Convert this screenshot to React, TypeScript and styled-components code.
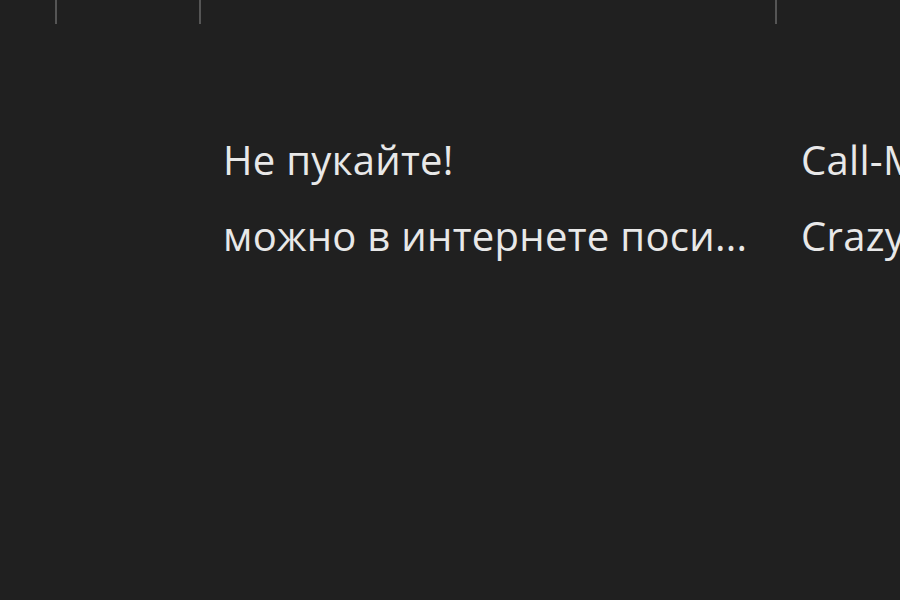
import React from 'react';
import styled, { createGlobalStyle } from 'styled-components';

interface Row {
  name: string;
  author: string;
}

const rows: Row[] = [
  { name: 'Не пукайте!', author: 'Call-Me Beep' },
  { name: 'можно в интернете поси...', author: 'Crazy Frog' },
];

const GlobalStyle = createGlobalStyle`
  html, body {
    margin: 0;
    padding: 0;
    background: #202020;
    overflow: hidden;
  }
`;

const Page = styled.div`
  width: 900px;
  height: 600px;
  background: #202020;
  color: #e8e8e8;
  font-family: 'Open Sans', 'Noto Sans', sans-serif;
  overflow: hidden;
`;

const Grid = styled.div`
  display: grid;
  grid-template-columns: 56px 144px 576px 300px;
  width: 1076px;
`;

const HeaderCell = styled.div<{ $divider?: boolean }>`
  height: 24px;
  border-right: ${(p) => (p.$divider ? '2px solid #555555' : 'none')};
  box-sizing: border-box;
  margin-right: ${(p) => (p.$divider ? '-1px' : '0')};
`;

const Body = styled.div`
  display: flex;
  flex-direction: column;
  gap: 20px;
  padding-top: 108px;
`;

const RowLine = styled.div`
  display: grid;
  grid-template-columns: 223px 578px 300px;
  height: 56px;
  align-items: center;
`;

const Cell = styled.span`
  font-size: 40px;
  line-height: 56px;
  white-space: nowrap;
  overflow: hidden;
  letter-spacing: 0.3px;
`;

const App = (): JSX.Element => {
  return (
    <>
      <GlobalStyle />
      <Page>
        <Grid>
          <HeaderCell $divider />
          <HeaderCell $divider />
          <HeaderCell $divider />
          <HeaderCell />
        </Grid>
        <Body>
          {rows.map((row, index) => (
            <RowLine key={index}>
              <span />
              <Cell>{row.name}</Cell>
              <Cell>{row.author}</Cell>
            </RowLine>
          ))}
        </Body>
      </Page>
    </>
  );
};

export default App;
